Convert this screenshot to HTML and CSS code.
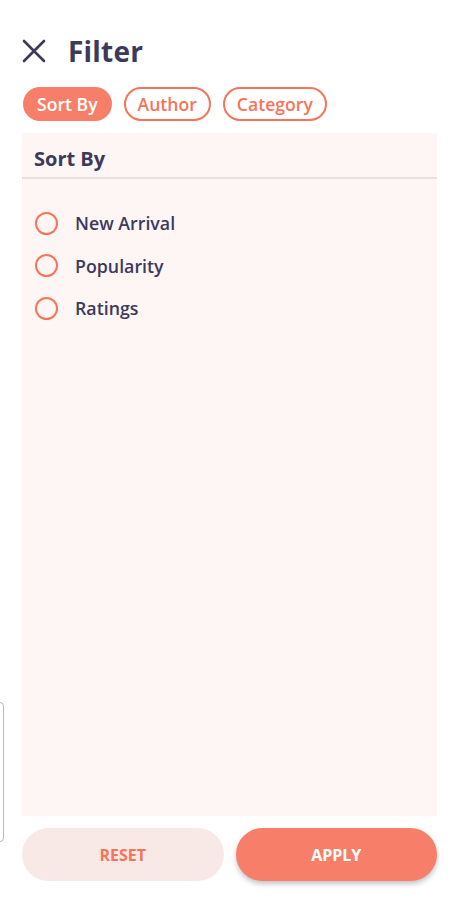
FILE: index.html
```html
<!DOCTYPE html>
<html lang="en">
<head>
<meta charset="utf-8">
<title>Filter</title>
<link rel="stylesheet" href="styles.css">
</head>
<body>
<div class="screen">
  <header class="top">
    <button class="close" aria-label="Close">
      <svg width="24" height="24" viewBox="0 0 24 24"><path d="M2 2 L22 22 M22 2 L2 22" stroke="#3b3a5a" stroke-width="2.6" stroke-linecap="round" fill="none"/></svg>
    </button>
    <h1 class="title">Filter</h1>
  </header>
  <nav class="chips">
    <span class="chip active">Sort By</span>
    <span class="chip">Author</span>
    <span class="chip">Category</span>
  </nav>
  <section class="panel">
    <h2 class="panel-title">Sort By</h2>
    <ul class="options">
      <li class="option"><span class="radio"></span><span>New Arrival</span></li>
      <li class="option"><span class="radio"></span><span>Popularity</span></li>
      <li class="option"><span class="radio"></span><span>Ratings</span></li>
    </ul>
  </section>
  <footer class="actions">
    <button class="btn reset">RESET</button>
    <button class="btn apply">APPLY</button>
  </footer>
  <div class="edge-tab"></div>
</div>
</body>
</html>
```
FILE: styles.css
```css
* { box-sizing: border-box; }
html, body { margin: 0; padding: 0; background: #fff; }
body { font-family: "Open Sans", "Noto Sans", sans-serif; color: #3b3a5a; }
.screen {
  position: relative;
  width: 460px;
  height: 900px;
  display: flex;
  flex-direction: column;
  padding: 36px 23px 19px 22px;
}
.top { display: flex; align-items: center; gap: 22px; height: 30px; }
.close { border: 0; background: none; padding: 0; width: 24px; height: 24px; display: flex; }
.title { margin: 0; font-size: 28px; font-weight: 700; line-height: 30px; letter-spacing: 0.2px; }
.chips { display: flex; gap: 12px; margin-top: 21px; padding-left: 1px; }
.chip {
  height: 34px;
  padding: 0 12px;
  border: 2px solid #f7735a;
  border-radius: 17px;
  color: #f7735a;
  font-size: 17.6px;
  font-weight: 600;
  display: flex;
  align-items: center;
}
.chip.active { background: #f77f6a; border-color: #f77f6a; color: #fff; }
.panel {
  flex: 1;
  margin-top: 12px;
  background: #fef6f5;
  display: flex;
  flex-direction: column;
}
.panel-title {
  margin: 0;
  padding: 13px 12px 0;
  height: 46px;
  font-size: 20px;
  font-weight: 700;
  line-height: 26px;
  border-bottom: 2px solid #e6e1df;
}
.options { list-style: none; margin: 0; padding: 32px 0 0 13px; display: flex; flex-direction: column; gap: 18.5px; }
.option { display: flex; align-items: center; gap: 17px; height: 24px; font-size: 17.8px; font-weight: 600; }
.radio { width: 23px; height: 23px; border: 2px solid #f7735a; border-radius: 50%; }
.actions { display: flex; gap: 12px; margin-top: 12px; }
.btn {
  flex: 1;
  height: 53px;
  border: 0;
  border-radius: 27px;
  font-family: "Open Sans", sans-serif;
  font-size: 16px;
  font-weight: 700;
}
.reset { background: #f9e9e6; color: #f7735a; }
.apply { background: #f77f6a; color: #fff; box-shadow: 0 3px 5px rgba(80, 90, 100, 0.35); }
.edge-tab {
  position: absolute;
  left: -8px;
  top: 702px;
  width: 12px;
  height: 140px;
  border: 1px solid #b9b9b9;
  border-radius: 4px;
}
```
